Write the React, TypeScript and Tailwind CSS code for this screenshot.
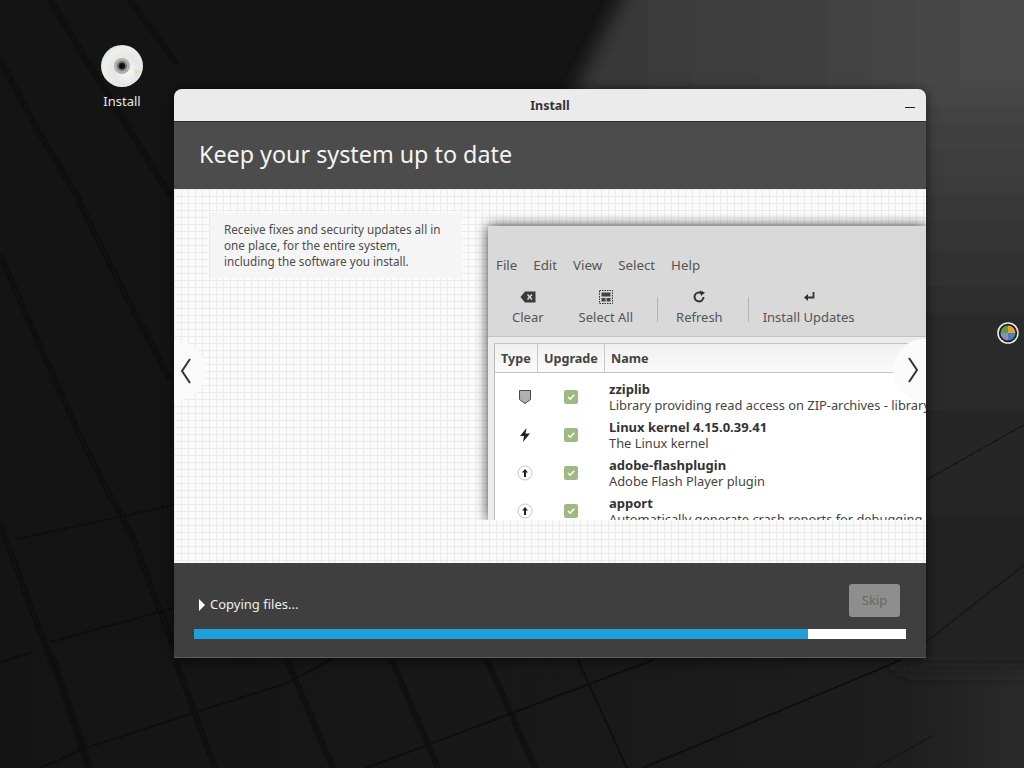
const packages = [
  { icon: "shield", name: "zziplib", desc: "Library providing read access on ZIP-archives - library" },
  { icon: "bolt", name: "Linux kernel 4.15.0.39.41", desc: "The Linux kernel" },
  { icon: "up", name: "adobe-flashplugin", desc: "Adobe Flash Player plugin" },
  { icon: "up", name: "apport", desc: "Automatically generate crash reports for debugging" },
]

const Wallpaper = () => (
  <svg className="absolute inset-0" width="1024" height="768" viewBox="0 0 1024 768">
    <defs>
      <linearGradient id="top" x1="0" y1="0" x2="1" y2="0">
        <stop offset="0" stopColor="#363636" />
        <stop offset="1" stopColor="#4c4c4c" />
      </linearGradient>
      <linearGradient id="fade" x1="0" y1="0" x2="0" y2="1">
        <stop offset="0" stopColor="#464646" />
        <stop offset="0.4" stopColor="#2c2c2c" />
        <stop offset="0.75" stopColor="#242424" />
        <stop offset="1" stopColor="#212121" />
      </linearGradient>
      <linearGradient id="bottom" x1="0" y1="0" x2="1" y2="0">
        <stop offset="0" stopColor="#141414" />
        <stop offset="0.6" stopColor="#191919" />
        <stop offset="0.88" stopColor="#1e1e1e" />
        <stop offset="1" stopColor="#2a2a2a" />
      </linearGradient>
      <filter id="soft"><feGaussianBlur stdDeviation="9" /></filter>
      <filter id="line"><feGaussianBlur stdDeviation="1.2" /></filter>
      <filter id="thin"><feGaussianBlur stdDeviation="0.6" /></filter>
    </defs>
    <rect width="1024" height="768" fill="#141414" />
    <rect y="640" width="1024" height="128" fill="url(#bottom)" />
    <rect x="900" y="80" width="160" height="590" fill="url(#fade)" filter="url(#soft)" />
    <polygon points="636,-30 1060,-30 1060,100 570,100" fill="url(#top)" filter="url(#soft)" />
    <g stroke="#0a0a0a" strokeWidth="3.5" fill="none" filter="url(#line)">
      <path d="M50 0 L80 50 L170 195" />
      <path d="M0 59 L33 122 L77 196 L110 265 L170 380" />
      <path d="M0 255 L43 353 L87 451 L133 539 L175 650" />
      <path d="M0 524 L33 613 L80 735 L90 768" />
      <path d="M130 0 L177 64" />
      <path d="M52 655 L88 768" />
      <path d="M176 662 L215 768" />
      <path d="M287 660 L333 768" />
      <path d="M392 660 L438 768" />
      <path d="M487 660 L535 768" />
    </g>
    <g stroke="#0c0c0c" strokeWidth="1.6" fill="none" filter="url(#thin)">
      <path d="M17 539 L174 505" />
      <path d="M50 642 L174 608" />
      <path d="M0 662 L33 652" />
      <path d="M40 768 L85 748 L287 683 L330 660" />
      <path d="M366 768 L653 660" />
      <path d="M643 768 L901 660" />
      <path d="M578 660 L627 768" />
    </g>
    <g stroke="#161616" strokeWidth="1.4" fill="none" filter="url(#thin)">
      <path d="M926 480 L1024 425" />
      <path d="M926 642 L1024 565" />
      <path d="M875 768 L934 735" />
    </g>
  </svg>
)

const DiscIcon = () => (
  <svg width="44" height="44" viewBox="0 0 44 44">
    <defs>
      <radialGradient id="disc" cx="0.62" cy="0.62" r="0.7">
        <stop offset="0" stopColor="#f8f8f8" />
        <stop offset="0.45" stopColor="#e6e6e6" />
        <stop offset="0.8" stopColor="#eef0ea" />
        <stop offset="1" stopColor="#dcdedc" />
      </radialGradient>
    </defs>
    <circle cx="22" cy="22" r="21" fill="url(#disc)" />
    <path d="M34 25 L41 26 A20 20 0 0 1 36 34 Z" fill="#e4e0c8" />
    <circle cx="22" cy="22" r="8" fill="#b0b0b0" />
    <circle cx="22" cy="22" r="5" fill="#6e6e6e" />
    <circle cx="22" cy="22" r="3" fill="#0e0e0e" />
  </svg>
)

const Chevron = ({ dir }: { dir: "left" | "right" }) => (
  <svg width="12" height="26" viewBox="0 0 12 26">
    <path
      d={dir === "left" ? "M10 1 L2 13 L10 25" : "M2 1 L10 13 L2 25"}
      fill="none"
      stroke="#333333"
      strokeWidth="2"
    />
  </svg>
)

const TypeIcon = ({ kind }: { kind: string }) => {
  if (kind === "shield") {
    return (
      <svg width="14" height="16" viewBox="0 0 14 16">
        <path d="M1.5 1.5 H12.5 V10.5 L7 14.5 L1.5 10.5 Z" fill="#b0b0b0" stroke="#4a4a4a" strokeWidth="1" />
      </svg>
    )
  }
  if (kind === "bolt") {
    return (
      <svg width="12" height="16" viewBox="0 0 12 16">
        <path d="M7.5 1 L1 9 H5 L4 15 L11 6.5 H6.5 Z" fill="#222222" />
      </svg>
    )
  }
  return (
    <svg width="16" height="16" viewBox="0 0 16 16">
      <circle cx="8" cy="8" r="7" fill="#ffffff" stroke="#c4c4c4" strokeWidth="1" />
      <path d="M8 4 L11 7.5 H9 V12 H7 V7.5 H5 Z" fill="#222222" />
    </svg>
  )
}

const Check = () => (
  <div className="flex h-[14px] w-[14px] items-center justify-center rounded-[2px] bg-[#9fb985]">
    <svg width="10" height="10" viewBox="0 0 10 10">
      <path d="M2 5 L4.2 7.2 L8.2 2.8" fill="none" stroke="#ffffff" strokeWidth="1.6" />
    </svg>
  </div>
)

const ToolButton = ({ label, icon, className }: { label: string; icon: React.ReactNode; className: string }) => (
  <div className={`flex flex-col items-center gap-[4px] pt-px ${className}`}>
    <div className="flex h-[16px] items-center">{icon}</div>
    <span className="text-[13px] leading-[16px] text-[#555555]">{label}</span>
  </div>
)

const App = () => {
  return (
    <div className="relative h-[768px] w-[1024px] overflow-hidden bg-[#141414] font-['Noto_Sans',sans-serif]">
      <Wallpaper />

      {/* desktop icon */}
      <div className="absolute left-[90px] top-[44px] flex w-[64px] flex-col items-center gap-[4px]">
        <DiscIcon />
        <span className="text-[13px] leading-[18px] text-[#e6e6e6]">Install</span>
      </div>

      {/* tray logo */}
      <div className="absolute left-[997px] top-[322px]">
        <svg width="22" height="22" viewBox="0 0 22 22">
          <circle cx="11" cy="11" r="10" fill="#1d1d1d" stroke="#e8e8e8" strokeWidth="1.6" />
          <path d="M11 11 L3.5 11 A7.5 7.5 0 0 1 11 3.5 Z" fill="#5f9a4a" />
          <path d="M11 11 L11 3.5 A7.5 7.5 0 0 1 18.5 11 Z" fill="#d9a52f" />
          <path d="M11 11 L18.5 11 A7.5 7.5 0 0 1 11 18.5 Z" fill="#4a7fb8" />
          <path d="M11 11 L11 18.5 A7.5 7.5 0 0 1 3.5 11 Z" fill="#8a8fb8" />
        </svg>
      </div>

      {/* installer window */}
      <div className="absolute left-[174px] top-[89px] flex h-[569px] w-[752px] flex-col overflow-hidden rounded-t-[8px] shadow-[0_2px_12px_rgba(0,0,0,0.6)]">
        <div className="relative flex h-[33px] shrink-0 items-center justify-center border-b border-[#2e2e2e] bg-[#ebebeb] pt-[2px]">
          <span className="text-[12.5px] font-bold text-[#333333]">Install</span>
          <div className="absolute right-[11px] top-[18px] h-[1px] w-[10px] bg-[#222222]" />
        </div>

        <div className="flex h-[67px] shrink-0 items-center bg-[#4c4c4c] pb-[2px] pl-[25px]">
          <h1 className="text-[23.3px] font-normal text-[#f4f4f4]">Keep your system up to date</h1>
        </div>

        <div className="relative flex h-[374px] shrink-0 gap-[14px] bg-[#fbfbfb] bg-[linear-gradient(#ebebeb_1px,transparent_1px),linear-gradient(90deg,#ebebeb_1px,transparent_1px)] bg-[size:7px_7px] pl-[36px] pt-[24px]">
          <div className="h-[65px] w-[252px] shrink-0 bg-[#f5f5f5] pl-[14px] pt-[8px] text-[11.7px] leading-[16px] text-[#4c4c4c]">
            <p>Receive fixes and security updates all in</p>
            <p>one place, for the entire system,</p>
            <p>including the software you install.</p>
          </div>

          <div className="h-[307px] w-[450px] shrink-0 overflow-hidden pl-[12px] pt-[13px]">
            <div className="flex h-full flex-col bg-[#d9d9d9] shadow-[0_0_12px_rgba(0,0,0,0.8)]">
              <div className="mt-[30px] flex gap-[16px] pl-[8px] text-[13.3px] leading-[18px] text-[#555555]">
                <span>File</span>
                <span>Edit</span>
                <span>View</span>
                <span>Select</span>
                <span>Help</span>
              </div>
              <div className="mt-[14px] flex h-[48px] shrink-0 items-start">
                <ToolButton
                  label="Clear"
                  className="ml-[24px]"
                  icon={
                    <svg width="16" height="12" viewBox="0 0 16 12">
                      <path d="M5 0.5 H15.5 V11.5 H5 L0.5 6 Z" fill="#3a3a3a" />
                      <path d="M7.5 3.5 L12 8.5 M12 3.5 L7.5 8.5" stroke="#d9d9d9" strokeWidth="1.5" />
                    </svg>
                  }
                />
                <ToolButton
                  label="Select All"
                  className="ml-[35px]"
                  icon={
                    <svg width="14" height="14" viewBox="0 0 14 14">
                      <rect x="0.5" y="0.5" width="13" height="13" fill="none" stroke="#333333" strokeDasharray="1.5 1" />
                      <rect x="2.5" y="2.5" width="9" height="4" fill="#444444" />
                      <rect x="2.5" y="8" width="4" height="3.5" fill="#444444" />
                      <rect x="7.5" y="8" width="4" height="3.5" fill="#444444" />
                    </svg>
                  }
                />
                <div className="ml-[24px] mt-[9px] h-[25px] w-px bg-[#b5b5b5]" />
                <ToolButton
                  label="Refresh"
                  className="ml-[18px]"
                  icon={
                    <svg width="14" height="14" viewBox="0 0 14 14">
                      <path d="M11.5 7 A4.5 4.5 0 1 1 9.5 3.2" fill="none" stroke="#333333" strokeWidth="2" />
                      <path d="M8 0.5 L13 2.5 L9 6 Z" fill="#333333" />
                    </svg>
                  }
                />
                <div className="ml-[25px] mt-[9px] h-[25px] w-px bg-[#b5b5b5]" />
                <ToolButton
                  label="Install Updates"
                  className="ml-[14px]"
                  icon={
                    <svg width="12" height="12" viewBox="0 0 12 12">
                      <path d="M10.5 1 V6.5 H3" fill="none" stroke="#333333" strokeWidth="1.8" />
                      <path d="M5 3 L1 6.5 L5 10 Z" fill="#333333" />
                    </svg>
                  }
                />
              </div>

              <div className="flex-1 border-t border-[#c2c2c2] bg-[#ececec] pl-[6px] pt-[6px]">
                <div className="h-full border-l border-[#bdbdbd] bg-white">
                  <div className="mb-[5px] flex h-[30px] border-y border-[#c4c4c4] bg-[linear-gradient(#f0f0f0,#fafafa)] text-[12.6px] font-bold leading-[30px] text-[#444444]">
                    <div className="w-[43px] border-r border-[#c9c9c9] pl-[6px]">Type</div>
                    <div className="w-[67px] border-r border-[#c9c9c9] pl-[6px]">Upgrade</div>
                    <div className="pl-[6px]">Name</div>
                  </div>
                  {packages.map((pkg) => (
                    <div key={pkg.name} className="flex h-[38px] items-center">
                      <div className="flex w-[60px] shrink-0 justify-center">
                        <TypeIcon kind={pkg.icon} />
                      </div>
                      <div className="flex w-[32px] shrink-0 justify-center">
                        <Check />
                      </div>
                      <div className="ml-[22px] whitespace-nowrap text-[12.85px] leading-[16px] text-[#444444]">
                        <div className="text-[13px] font-bold text-[#333333]">{pkg.name}</div>
                        <div>{pkg.desc}</div>
                      </div>
                    </div>
                  ))}
                </div>
              </div>
            </div>
          </div>

          {/* slide arrows */}
          <div className="absolute left-0 top-[152px] flex h-[60px] w-[32px] items-center justify-start rounded-r-[30px] bg-[#fafafa] pl-[6px]">
            <Chevron dir="left" />
          </div>
          <div className="absolute right-0 top-[150px] flex h-[62px] w-[33px] items-center justify-end rounded-l-[31px] bg-[#fafafa] pr-[7px]">
            <Chevron dir="right" />
          </div>
        </div>

        <div className="flex flex-1 flex-col border-b border-[#5c5c5c] bg-[#3f3f3f] px-[20px]">
          <div className="mt-[21px] flex h-[33px] items-center justify-between pr-[6px]">
            <div className="flex items-center gap-[5px] pl-[5px] pt-[8px] text-[13px] text-[#eeeeee]">
              <div className="h-0 w-0 border-y-[6px] border-l-[6px] border-y-transparent border-l-white" />
              <span>Copying files...</span>
            </div>
            <div className="flex h-[33px] w-[51px] items-center justify-center rounded-[3px] bg-[#8e8e8e] text-[13px] text-[#666666]">
              Skip
            </div>
          </div>
          <div className="mt-[12px] h-[10px] w-[712px] bg-white">
            <div className="h-full w-[614px] bg-[#1f9fdc]" />
          </div>
        </div>
      </div>
    </div>
  )
}

export default App
